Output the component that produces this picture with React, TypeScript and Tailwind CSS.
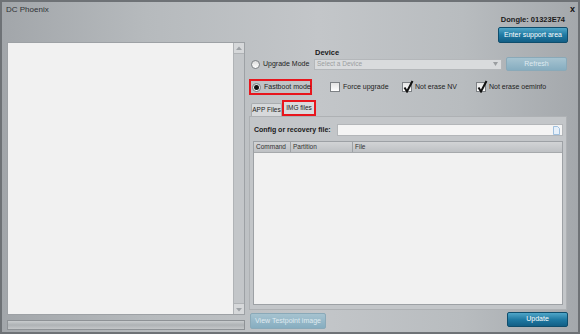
import React from "react";

const font = { fontFamily: '"Liberation Sans", Arial, sans-serif' };

function Radio({ checked }: { checked?: boolean }) {
  return (
    <span className="w-[9px] h-[9px] rounded-full border border-[#7d8185] bg-gradient-to-b from-[#dcdcdc] to-[#ffffff] flex items-center justify-center shrink-0">
      {checked && <span className="w-[5px] h-[5px] rounded-full bg-[#111]" />}
    </span>
  );
}

function Check({ checked }: { checked?: boolean }) {
  return (
    <span className="relative w-[10px] h-[10px] border border-[#7d8185] bg-gradient-to-b from-[#e4e4e4] to-[#ffffff] shrink-0">
      {checked && (
        <svg className="absolute left-[0px] top-[-3px]" width="11" height="13" viewBox="0 0 11 13">
          <path d="M1.5 7.5 L4 11.5 L9.5 1" stroke="#111" strokeWidth="2" fill="none" />
        </svg>
      )}
    </span>
  );
}

function BlueButton({ children, disabled, className }: { children: React.ReactNode; disabled?: boolean; className?: string }) {
  return (
    <div
      className={
        "flex items-center justify-center rounded-[2px] text-[7px] border whitespace-nowrap " +
        (disabled
          ? "bg-gradient-to-b from-[#a6c3d0] to-[#86adc0] border-[#8aa9b8] text-[#dfeaf0] "
          : "bg-gradient-to-b from-[#4fa6c8] via-[#1f7aa3] to-[#135f86] border-[#0f4d6c] text-white ") +
        (className || "")
      }
    >
      {children}
    </div>
  );
}

export default function App() {
  return (
    <div
      style={font}
      className="w-[580px] h-[334px] flex flex-col border-[2px] border-[#6e7276] bg-[linear-gradient(90deg,#a2a6aa_0%,#b6babd_25%,#c3c6c9_55%,#b8bcbf_80%,#a4a8ac_100%)] text-[#222] overflow-hidden whitespace-nowrap"
    >
      {/* Title bar */}
      <div className="h-[12px] flex items-center justify-between pl-[4px] pr-[3px]">
        <span className="text-[8px] text-[#2f3235] leading-none mt-[3px]">DC Phoenix</span>
        <span className="text-[9px] font-bold text-[#111] leading-none mt-[3px]">x</span>
      </div>

      <div className="flex-1 flex pl-[5px] pr-[10px] pb-[2px]">
        {/* Left column */}
        <div className="w-[238px] flex flex-col pt-[28px]">
          <div className="flex-1 flex border border-[#9da1a5] bg-[#f1f1f1]">
            <div className="flex-1" />
            <div className="w-[11px] flex flex-col bg-[#c3c6c9] border-l border-[#b0b3b6]">
              <div className="h-[11px] bg-[#d6d8da] border-b border-[#b0b3b6] flex items-center justify-center">
                <svg width="6" height="5" viewBox="0 0 6 5"><path d="M0 4 L3 0.5 L6 4 Z" fill="#9ea2a6" /></svg>
              </div>
              <div className="flex-1" />
              <div className="h-[11px] bg-[#d6d8da] border-t border-[#b0b3b6] flex items-center justify-center">
                <svg width="6" height="5" viewBox="0 0 6 5"><path d="M0 1 L3 4.5 L6 1 Z" fill="#9ea2a6" /></svg>
              </div>
            </div>
          </div>
          <div className="h-[10px] mt-[5px] border border-[#8e9296] bg-gradient-to-b from-[#c9ccce] via-[#aeb2b5] to-[#c4c7c9]" />
        </div>

        {/* Right column */}
        <div className="w-[319px] ml-[4px] flex flex-col">
          <div className="h-[12px] flex items-center justify-end pr-[3px]">
            <span className="text-[7.5px] font-bold text-[#1a1a1a]">Dongle: 01323E74</span>
          </div>
          <div className="flex justify-end mt-[1px]">
            <BlueButton className="w-[70px] h-[16px]">Enter support area</BlueButton>
          </div>
          <div className="h-[9px] mt-[5px] pl-[66px] flex items-center">
            <span className="text-[7.5px] font-bold text-[#1a1a1a]">Device</span>
          </div>
          <div className="h-[14px] flex items-center">
            <div className="w-[65px] flex items-center gap-[3px] pl-[2px]">
              <Radio />
              <span className="text-[7px]">Upgrade Mode</span>
            </div>
            <div className="w-[188px] h-[11px] border border-[#b4b7ba] bg-[#d9dbdd] flex items-center justify-between pl-[2px] pr-[3px]">
              <span className="text-[6.5px] text-[#9a9da0]">Select a Device</span>
              <svg width="5" height="4" viewBox="0 0 5 4"><path d="M0 0 L5 0 L2.5 4 Z" fill="#9a9da0" /></svg>
            </div>
            <BlueButton disabled className="ml-[4px] w-[61px] h-[14px]">Refresh</BlueButton>
          </div>
          <div className="h-[16px] mt-[8px] flex items-center">
            <div className="w-[63px] h-[16px] border-[2px] border-[#e8161d] flex items-center gap-[3px] pl-[1px]">
              <Radio checked />
              <span className="text-[7px]">Fastboot mode</span>
            </div>
            <div className="ml-[18px] w-[72px] flex items-center gap-[3px]">
              <Check />
              <span className="text-[7px]">Force upgrade</span>
            </div>
            <div className="w-[74px] flex items-center gap-[3px]">
              <Check checked />
              <span className="text-[7px]">Not erase NV</span>
            </div>
            <div className="flex items-center gap-[3px]">
              <Check checked />
              <span className="text-[7px]">Not erase oeminfo</span>
            </div>
          </div>
          {/* Tabs */}
          <div className="h-[16px] mt-[5px] flex items-end pl-[2px]">
            <div className="w-[31px] h-[13px] border border-b-0 border-[#a9acaf] bg-[#d7d9db] rounded-t-[2px] flex items-center justify-center">
              <span className="text-[6.5px]">APP Files</span>
            </div>
            <div className="w-[34px] h-[16px] border-[2px] border-[#e8161d] bg-[#d9dbdd] flex items-center justify-center">
              <span className="text-[6.5px]">IMG files</span>
            </div>
          </div>
          {/* Panel */}
          <div className="flex-1 flex flex-col border border-[#aeb1b4] bg-[#c3c6c9] px-[3px] pb-[4px] mr-[1px]">
            <div className="h-[12px] mt-[7px] flex items-center">
              <span className="w-[84px] text-[7px] font-bold text-[#1a1a1a] pl-[1px]">Config or recovery file:</span>
              <div className="flex-1 h-[12px] border border-[#b3b6b9] bg-[#f4f4f4] flex items-center justify-end pr-[2px]">
                <svg width="7" height="9" viewBox="0 0 7 9">
                  <path d="M0.5 0.5 H4.5 L6.5 2.5 V8.5 H0.5 Z" fill="#e6f0fa" stroke="#8cb4d8" strokeWidth="0.8" />
                </svg>
              </div>
            </div>
            <div className="flex-1 mt-[5px] flex flex-col border border-[#9da1a5] bg-[#f1f1f1]">
              <div className="h-[11px] flex bg-gradient-to-b from-[#d2d4d6] to-[#bec1c4] border-b border-[#a6a9ac] text-[6.5px] text-[#333]">
                <div className="w-[37px] border-r border-[#9da1a5] flex items-center pl-[2px]">Command</div>
                <div className="w-[62px] border-r border-[#9da1a5] flex items-center pl-[2px]">Partition</div>
                <div className="flex-1 flex items-center pl-[2px]">File</div>
              </div>
              <div className="flex-1" />
            </div>
          </div>
          <div className="h-[18px] mt-[2px] flex items-start justify-between">
            <BlueButton disabled className="ml-[1px] w-[76px] h-[16px] mt-[1px]">View Testpoint image</BlueButton>
            <BlueButton className="w-[61px] h-[15px]">Update</BlueButton>
          </div>
        </div>
      </div>
    </div>
  );
}
